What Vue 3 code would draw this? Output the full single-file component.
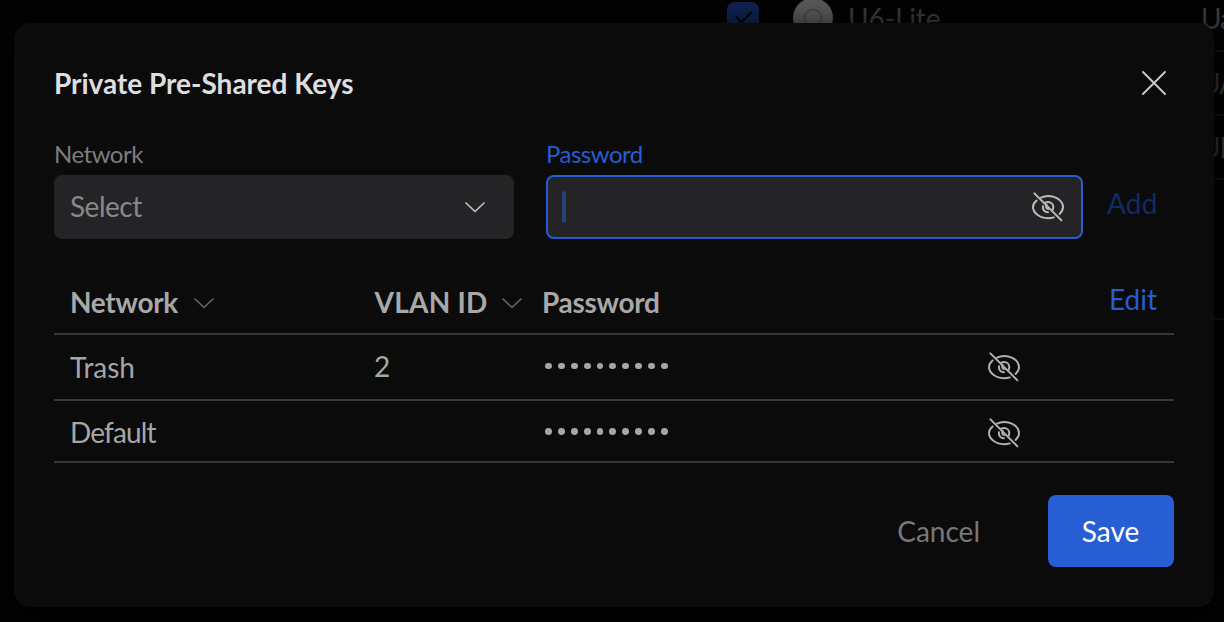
<script setup>
import { h, ref } from 'vue'

const EyeOff = () =>
  h('svg', { viewBox: '0 0 32 32', width: 32, height: 32, fill: 'none', stroke: 'currentColor', 'stroke-width': 2, 'stroke-linecap': 'round' }, [
    h('path', { d: 'M2.4 2.4 29.4 29.4' }),
    h('path', { d: 'M9 6.600C11.200 5.500 13.600 4.900 16 4.900c8.300 0 15 5.400 15 11.200 0 2.500-1.200 4.800-3.400 6.800' }),
    h('path', { d: 'M4.600 9.500C2.300 11.400 1 13.700 1 16.100c0 5.800 6.700 11.100 15 11.100 2 0 4-.3 5.800-.8' }),
    h('path', { d: 'M13.200 11.600c1-.5 1.900-.7 2.800-.7 3 0 5.300 2.300 5.300 5.200 0 1-.2 1.900-.7 2.700' }),
    h('path', { d: 'M10.900 15.200c-.5 3.500 1.900 6.100 5.100 6.100' }),
    h('path', { 'stroke-width': 1.7, d: 'M14.800 13.800c-1.400 1.200-1.200 3.900 1.600 4.300' })
  ])
const Chevron = () =>
  h('svg', { viewBox: '0 0 20 12', width: 20, height: 12, fill: 'none', stroke: 'currentColor', 'stroke-linecap': 'round', 'stroke-linejoin': 'round' }, [
    h('path', { d: 'M1 2 10 10.500 19 2' })
  ])

const password = ref('')
const rows = [
  { network: 'Trash', vlan: '2' },
  { network: 'Default', vlan: '' }
]
const devices = ['Ua', 'UA', 'UI']
</script>

<template>
  <div class="screen">
    <div class="page">
      <div v-for="(d, i) in devices" :key="d" class="device" :class="{ first: i === 0 }">
        <template v-if="i === 0">
          <span class="check">
            <svg viewBox="0 0 32 32" width="32" height="32" fill="none" stroke="#02040a" stroke-width="2.4" stroke-linecap="round"><path d="M9.500 15 14 20.500 24.300 10.300" /></svg>
          </span>
          <span class="ap"><i></i></span>
          <span class="name">U6-Lite</span>
        </template>
        <span class="model">{{ d }}</span>
      </div>
      <div class="device rest"></div>
    </div>

    <section class="modal">
      <header>
        <h1><span class="t title">Private Pre-Shared Keys</span></h1>
        <button class="close" aria-label="Close">
          <svg viewBox="0 0 26 26" width="26" height="26" fill="none" stroke="#c8c8ca" stroke-width="2" stroke-linecap="round"><path d="M2 2 24 24M24 2 2 24" /></svg>
        </button>
      </header>

      <form class="fields" @submit.prevent>
        <div class="field network">
          <label><span class="t label">Network</span></label>
          <div class="control select"><span class="t sel">Select</span><Chevron class="chev" /></div>
        </div>
        <div class="field password">
          <label><span class="t label">Password</span></label>
          <div class="control input"><span class="caret">{{ password }}</span><EyeOff class="eye" /></div>
        </div>
        <button class="add"><span class="t addt">Add</span></button>
      </form>

      <div class="table">
        <div class="row head">
          <div class="cell"><span class="t hnet">Network</span><Chevron class="sort" /></div>
          <div class="cell"><span class="t hvlan">VLAN ID</span><Chevron class="sort" /></div>
          <div class="cell"><span class="t hpass">Password</span></div>
          <button class="edit"><span class="t editt">Edit</span></button>
        </div>
        <div v-for="r in rows" :key="r.network" class="row body">
          <div class="cell"><span class="t" :class="r.network.toLowerCase()">{{ r.network }}</span></div>
          <div class="cell vlan"><span class="t">{{ r.vlan }}</span></div>
          <div class="cell dots"><i v-for="n in 10" :key="n"></i></div>
          <div class="cell"><EyeOff class="eye" /></div>
        </div>
      </div>

      <footer>
        <button class="cancel"><span class="t cancelt">Cancel</span></button>
        <button class="save"><span class="t savet">Save</span></button>
      </footer>
    </section>
  </div>
</template>

<style>
body { background: #030303; overflow: hidden; }
</style>

<style scoped>
* { box-sizing: border-box; }
.screen {
  position: relative;
  width: 1224px;
  height: 622px;
  overflow: hidden;
  background: #030303;
  font-family: Lato, "Liberation Sans", sans-serif;
  font-size: 28px;
  line-height: 36px;
  color: #a6a6a6;
}
button { border: 0; padding: 0; background: none; font: inherit; color: inherit; }
svg { display: block; flex: none; }
.t { white-space: pre; }

.page { margin-left: 200px; color: #3a3a3b; }
.device { height: 64px; display: flex; align-items: center; border-bottom: 2px solid #131314; padding-left: 1000px; white-space: nowrap; }
.device.first { height: 52px; padding: 0 0 14px 527px; }
.device.rest { height: 140px; }
.device > * { flex: none; }
.check { width: 32px; height: 32px; border-radius: 8px; background: #0e2350; }
.ap { width: 40px; height: 40px; margin-left: 34px; border-radius: 50%; background: #585858; display: grid; place-items: center; }
.ap i { width: 18px; height: 18px; border: 1px solid #303a4a; border-radius: 50%; }
.name { margin-left: 15px; width: 353px; letter-spacing: -0.1px; }
.model { letter-spacing: -1px; }

.modal {
  position: absolute;
  left: 14px;
  top: 23px;
  width: 1200px;
  height: 584px;
  padding: 40px;
  border-radius: 16px;
  background: #0b0b0b;
  box-shadow: 0 8px 32px #000;
}
header { height: 40px; display: flex; align-items: center; justify-content: space-between; }
h1 { margin: 0; font-size: 28px; font-weight: 700; color: #dedee0; }
.title { letter-spacing: -0.02px; }
.close { margin-right: 7px; }

.fields { display: flex; margin-top: 35px; }
.field label { display: block; height: 37px; font-size: 24px; line-height: 32px; color: #7d7d7e; }
.label { letter-spacing: -0.5px; }
.network { width: 460px; margin-right: 32px; }
.password { width: 537px; margin-right: 24px; }
.password label { color: #265dd3; }
.control { height: 64px; display: flex; align-items: center; justify-content: space-between; border-radius: 8px; background: #242426; }
.select { padding: 0 29.5px 0 16px; color: #88888a; }
.sel { padding-bottom: 2px; letter-spacing: -0.5px; }
.chev { color: #c0c0c2; stroke-width: 1.7; }
.input { padding: 0 17px 0 14px; border: 2px solid #265dd3; }
.caret { width: 4px; height: 32px; border-radius: 2px; background: #294078; }
.input .eye { color: #bdbdbf; }
.add { align-self: flex-end; height: 64px; padding-bottom: 8px; color: #102c67; }
.addt { letter-spacing: 0.2px; }

.table { margin-top: 32px; }
.row { display: grid; grid-template-columns: 304px 168px 446px 1fr; align-items: center; padding-left: 16px; border-bottom: 2px solid #37373a; }
.cell { display: flex; align-items: center; }
.head { height: 64px; font-weight: 700; color: #a8a8a8; }
.hnet, .hpass { letter-spacing: -0.3px; }
.hvlan { margin: 0 -2px 0 0.5px; letter-spacing: 0.25px; }
.sort { margin: 1px 0 0 16px; color: #69696b; stroke-width: 1.5; }
.edit { justify-self: end; margin: 0 17px 6px 0; color: #265dd3; font-weight: 400; }
.body { height: 66px; }
.body:last-child { height: 62px; padding-top: 3px; }
.trash { letter-spacing: -0.05px; }
.default { padding-bottom: 2px; letter-spacing: -0.85px; }
.vlan { padding-bottom: 2px; }
.dots { gap: 6px; padding: 0 0 2px 3px; }
.dots i { width: 6.900px; height: 6.900px; border-radius: 50%; background: #a6a6a6; }
.body .eye { color: #b0b0b0; }

footer { display: flex; justify-content: flex-end; align-items: center; margin-top: 32px; }
.cancel { margin-right: 68px; color: #777778; }
.save { width: 126px; height: 72px; border-radius: 8px; background: #285ed3; color: #fff; }
.savet { margin-right: 1px; }
</style>
